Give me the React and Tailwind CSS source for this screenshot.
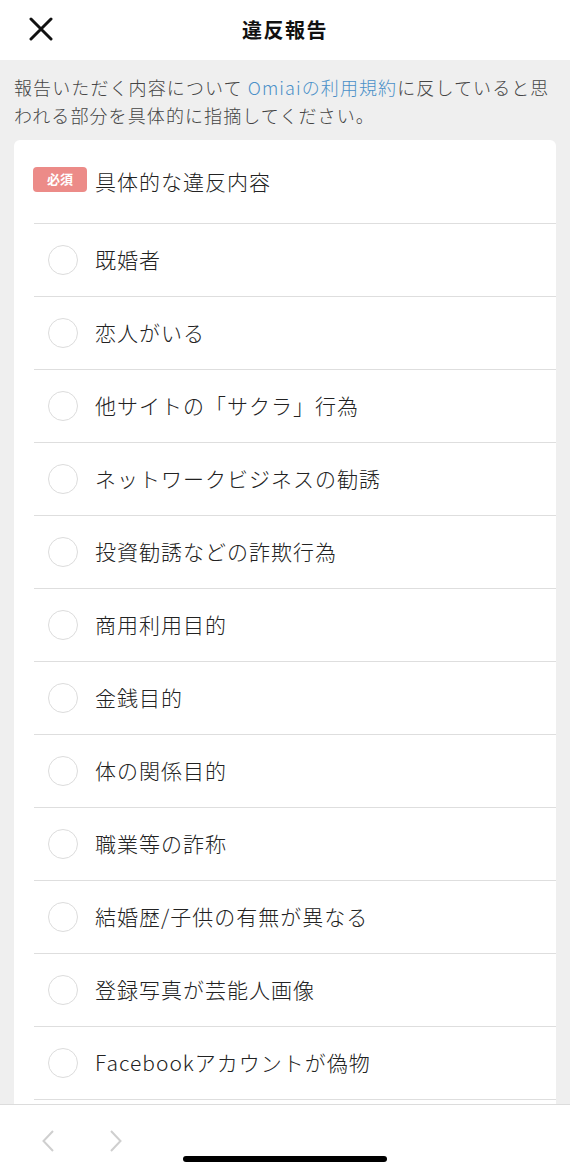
import React from "react";

const reasons = [
  "既婚者",
  "恋人がいる",
  "他サイトの「サクラ」行為",
  "ネットワークビジネスの勧誘",
  "投資勧誘などの詐欺行為",
  "商用利用目的",
  "金銭目的",
  "体の関係目的",
  "職業等の詐称",
  "結婚歴/子供の有無が異なる",
  "登録写真が芸能人画像",
  "Facebookアカウントが偽物",
  "その他",
];

const font = { fontFamily: '"Noto Sans CJK JP", "Noto Sans", sans-serif' };

export default function App() {
  return (
    <div className="h-screen w-full flex flex-col overflow-hidden bg-[#efefef] text-[#333]" style={font}>
      {/* header */}
      <div className="h-[60px] shrink-0 bg-white relative flex items-center justify-center">
        <svg className="absolute left-[29px] top-[17px]" width="24" height="24" viewBox="0 0 24 24">
          <path d="M2 2 L22 22 M22 2 L2 22" stroke="#111" strokeWidth="3" strokeLinecap="round" />
        </svg>
        <h1 className="text-[20px] font-bold text-[#111] tracking-[1.5px]">違反報告</h1>
      </div>

      <div className="flex-1 overflow-hidden">
        <p className="pl-[14px] pr-[10px] pt-[13px] pb-[11px] text-[18px] leading-[28px] text-[#444] tracking-[1.1px] font-light">
          報告いただく内容について <span className="text-[#4a90c8]">Omiaiの利用規約</span>に反していると思われる部分を具体的に指摘してください。
        </p>

        <div className="mx-[14px] bg-white rounded-md">
          <div className="h-[83px] flex items-center pl-[19px] pt-[1px]">
            <span className="h-[25px] w-[54px] rounded-[4px] bg-[#ec8b88] text-white text-[13px] font-bold flex items-center justify-center mb-[6px]">
              必須
            </span>
            <span className="ml-[8px] text-[21px] text-[#222] tracking-[1px] font-light">具体的な違反内容</span>
          </div>
          <div className="ml-5">
            {reasons.map((r) => (
              <div key={r} className="h-[73px] border-t border-[#dedede] flex items-center pl-[14px]">
                <span className="w-[30px] h-[30px] rounded-full border border-[#dcdcdc] shrink-0" />
                <span className="ml-[17px] text-[21px] text-[#222] tracking-[1px] font-light">{r}</span>
              </div>
            ))}
          </div>
        </div>
      </div>

      {/* bottom toolbar */}
      <div className="h-[69px] shrink-0 bg-white border-t border-[#dcdcdc] relative">
        <div className="flex items-center gap-[56px] pl-[42px] pt-[25px]">
          <svg width="12" height="22" viewBox="0 0 12 22">
            <path d="M11 1 L1.5 11 L11 21" fill="none" stroke="#cfcfcf" strokeWidth="2" />
          </svg>
          <svg width="12" height="22" viewBox="0 0 12 22">
            <path d="M1 1 L10.5 11 L1 21" fill="none" stroke="#cfcfcf" strokeWidth="2" />
          </svg>
        </div>
        <div className="absolute left-[183px] bottom-[11px] w-[204px] h-[6px] rounded-full bg-black" />
      </div>
    </div>
  );
}
